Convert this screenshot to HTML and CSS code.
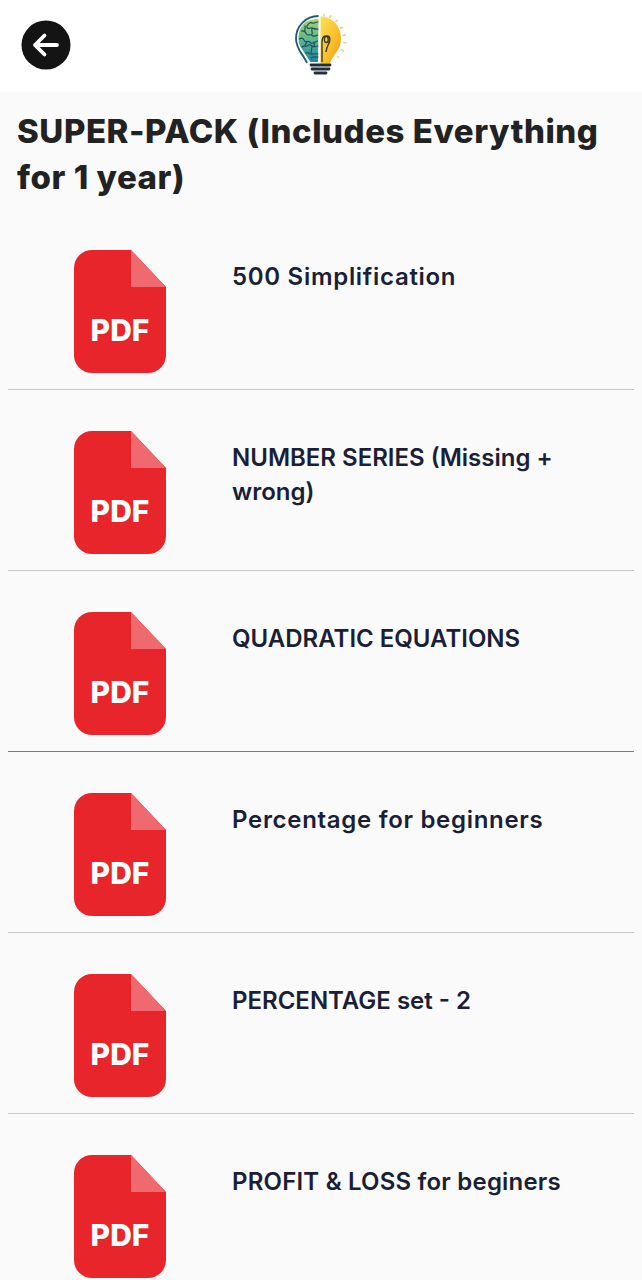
FILE: index.html
```html
<!DOCTYPE html>
<html lang="en">
<head>
<meta charset="utf-8">
<title>Super-Pack</title>
<link rel="stylesheet" href="styles.css">
</head>
<body>
<header class="topbar">
  <button class="back" aria-label="Back">
    <svg viewBox="0 0 50 50" width="50" height="50"><circle cx="25" cy="25" r="24.500" fill="#141414"/><path d="M36 25H14M23.500 15.500 14 25 23.500 34.500" fill="none" stroke="#fff" stroke-width="3.800" stroke-linecap="round" stroke-linejoin="round"/></svg>
  </button>
  <svg class="logo" viewBox="0 0 56 64" width="56" height="64">
    <defs>
      <linearGradient id="brain" x1="0" y1="0" x2="0" y2="1"><stop offset="0" stop-color="#a4d268"/><stop offset=".5" stop-color="#58b88c"/><stop offset="1" stop-color="#1c86a3"/></linearGradient>
      <linearGradient id="bulb" x1="0" y1="0" x2="1" y2="1"><stop offset="0" stop-color="#fde05a"/><stop offset=".6" stop-color="#f9bd26"/><stop offset="1" stop-color="#ee8f14"/></linearGradient>
    </defs>
    <path d="M25.500 4C13 4 3 14 3 26.500c0 9 5 14 8 19 1.500 2.500 2.500 4 3 5.500" fill="none" stroke="#1d5a70" stroke-width="1.800"/>
    <path d="M25.500 7C18 7 12 9 9 14c-3 4-3.500 8-3.500 13 0 6 3 9 6 14 2 3 4 6 6 9h7.500z" fill="url(#brain)"/>
    <path d="M25 10c-3 0-4 2-6 1s-4 1-5 3 2 3 4 2 3 2 7 1M8.500 19c3-1 4 1 5 3s4 0 5 1 3 2 6 0M6.500 27c3-2 4 0 5 2s4-1 5 1 5 1 8-1M9 35c2-2 4 0 5-1s3-2 5 0 3 0 6 0M13 41c2-1 3 0 4 1s4-1 8 0M18 46c1-2 3-1 7-1M12 14c1 2-1 3 0 5M19 17c-1 2 1 3 0 5M14 30c-1 2-2 2-2 4M21 30c0 2 1 3 0 4M19 35c-1 2 0 4-1 6" fill="none" stroke="#1f4f66" stroke-width="1.200" stroke-linecap="round"/>
    <path d="M27.500 4.500c12 0 20.500 10 20.500 22 0 8-4 13-7.500 18-2 3-3 5-3.500 7H27.500z" fill="url(#bulb)"/>
    <path d="M29 50V31c0-4 1-7 3.500-7 3.500 0 3.500 6 1 6.500-3 .5-3-6.500 1-6.500 3 0 3 5 1 8-1 2-2 4-2.500 8" fill="none" stroke="#3b3a33" stroke-width="1.400"/>
    <path d="M31 2l.5 2.500M38 3.500l-1.500 2.500M45 8l-2.500 2M50 15l-3 1.500M53 23l-3.500.5M53.500 31l-3.500-.5M51 39l-3-1.500M46 46l-2-2" stroke="#e9cf8c" stroke-width="1.500" fill="none"/>
    <path d="M18 53H37M19 57H36M22 61H33" stroke="#232f38" stroke-width="2.800" fill="none" stroke-linecap="round"/>
  </svg>
</header>
<main class="content">
  <h1 class="title">SUPER-PACK (Includes Everything for 1 year)</h1>
  <ul class="list">
    <li class="item">
      <div class="thumb"><svg class="pdf" viewBox="0 0 92 123"><path d="M18 0H57L92 37V105a18 18 0 0 1-18 18H18A18 18 0 0 1 0 105V18A18 18 0 0 1 18 0Z" fill="#e7252b"/><path d="M57 0 90 35Q92 37 89 37H57Z" fill="#f0696e"/></svg><span class="pdf-label">PDF</span></div>
      <p class="name name-wide">500 Simplification</p>
    </li>
    <li class="item">
      <div class="thumb"><svg class="pdf" viewBox="0 0 92 123"><path d="M18 0H57L92 37V105a18 18 0 0 1-18 18H18A18 18 0 0 1 0 105V18A18 18 0 0 1 18 0Z" fill="#e7252b"/><path d="M57 0 90 35Q92 37 89 37H57Z" fill="#f0696e"/></svg><span class="pdf-label">PDF</span></div>
      <p class="name">NUMBER SERIES (Missing + wrong)</p>
    </li>
    <li class="item item-dark">
      <div class="thumb"><svg class="pdf" viewBox="0 0 92 123"><path d="M18 0H57L92 37V105a18 18 0 0 1-18 18H18A18 18 0 0 1 0 105V18A18 18 0 0 1 18 0Z" fill="#e7252b"/><path d="M57 0 90 35Q92 37 89 37H57Z" fill="#f0696e"/></svg><span class="pdf-label">PDF</span></div>
      <p class="name">QUADRATIC EQUATIONS</p>
    </li>
    <li class="item">
      <div class="thumb"><svg class="pdf" viewBox="0 0 92 123"><path d="M18 0H57L92 37V105a18 18 0 0 1-18 18H18A18 18 0 0 1 0 105V18A18 18 0 0 1 18 0Z" fill="#e7252b"/><path d="M57 0 90 35Q92 37 89 37H57Z" fill="#f0696e"/></svg><span class="pdf-label">PDF</span></div>
      <p class="name name-wide">Percentage for beginners</p>
    </li>
    <li class="item">
      <div class="thumb"><svg class="pdf" viewBox="0 0 92 123"><path d="M18 0H57L92 37V105a18 18 0 0 1-18 18H18A18 18 0 0 1 0 105V18A18 18 0 0 1 18 0Z" fill="#e7252b"/><path d="M57 0 90 35Q92 37 89 37H57Z" fill="#f0696e"/></svg><span class="pdf-label">PDF</span></div>
      <p class="name">PERCENTAGE set - 2</p>
    </li>
    <li class="item">
      <div class="thumb"><svg class="pdf" viewBox="0 0 92 123"><path d="M18 0H57L92 37V105a18 18 0 0 1-18 18H18A18 18 0 0 1 0 105V18A18 18 0 0 1 18 0Z" fill="#e7252b"/><path d="M57 0 90 35Q92 37 89 37H57Z" fill="#f0696e"/></svg><span class="pdf-label">PDF</span></div>
      <p class="name name-mid">PROFIT &amp; LOSS for beginers</p>
    </li>
  </ul>
</main>
</body>
</html>
```
FILE: styles.css
```css
* { box-sizing: border-box; }
html, body { margin: 0; height: 100%; }
body {
  height: 1280px;
  overflow: hidden;
  background: #fafafa;
  font-family: "Inter", "Liberation Sans", sans-serif;
}
.topbar {
  position: relative;
  height: 92px;
  background: #fff;
  display: flex;
  justify-content: center;
  padding-top: 12px;
}
.back {
  position: absolute;
  left: 21px;
  top: 20px;
  width: 50px;
  height: 50px;
  padding: 0;
  border: 0;
  background: none;
}
.back svg { display: block; }
.logo { display: block; }
.content { padding: 16px 8px 0 8px; }
.title {
  margin: 0 0 9px 9px;
  max-width: 600px;
  font-size: 33px;
  line-height: 46px;
  font-weight: 800;
  letter-spacing: 0.55px;
  color: #222;
}
.list { margin: 0; padding: 0; list-style: none; }
.item {
  height: 181px;
  display: flex;
  padding: 41px 0 0 66px;
  border-bottom: 1px solid #c8c8c8;
}
.item-dark { border-bottom-color: #7d7d7d; }
.thumb {
  position: relative;
  flex: none;
  width: 92px;
  height: 123px;
  margin-right: 66px;
}
.pdf { display: block; width: 92px; height: 123px; }
.pdf-label {
  position: absolute;
  left: 0;
  right: 0;
  top: 62px;
  text-align: center;
  color: #fff;
  font-size: 30px;
  line-height: 36px;
  font-weight: 800;
}
.name {
  margin: 0;
  padding-top: 10px;
  font-size: 24px;
  line-height: 34px;
  font-weight: 600;
  color: #1a1f36;
  max-width: 340px;
}
.name-wide { letter-spacing: 0.7px; }
.name-mid { letter-spacing: 0.2px; }
```
